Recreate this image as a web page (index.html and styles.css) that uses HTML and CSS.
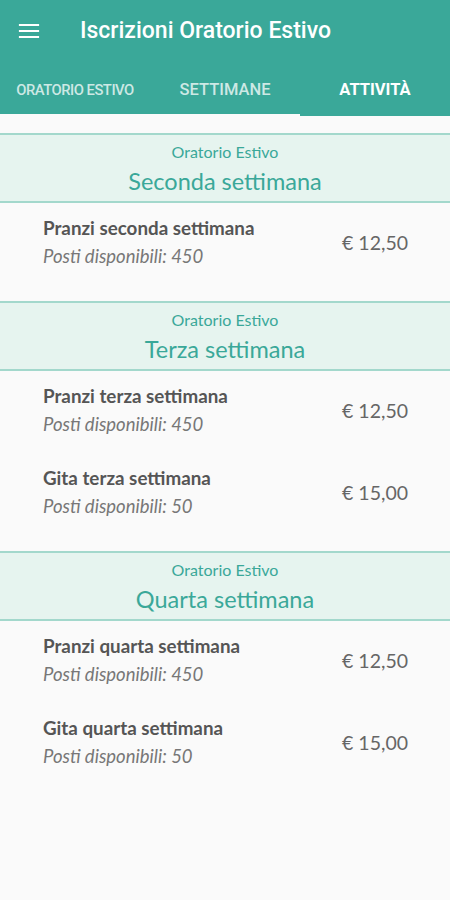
FILE: index.html
```html
<!DOCTYPE html>
<html lang="it">
<head>
  <meta charset="UTF-8" />
  <meta name="viewport" content="width=device-width, initial-scale=1.0"/>
  <title>Iscrizioni Oratorio Estivo</title>
  <link rel="stylesheet" href="styles.css">
</head>
<body>
  <header class="appbar">
    <div class="toolbar">
      <button class="menu-btn" aria-label="Menu">
        <svg width="24" height="24" viewBox="0 0 24 24">
          <path d="M3 6h18M3 12h18M3 18h18" stroke="#fff" stroke-width="2.2" stroke-linecap="square"/>
        </svg>
      </button>
      <h1>Iscrizioni Oratorio Estivo</h1>
    </div>
    <nav class="tabs">
      <div class="tab small">ORATORIO ESTIVO</div>
      <div class="tab">SETTIMANE</div>
      <div class="tab active">ATTIVITÀ</div>
    </nav>
  </header>

  <main class="content">
    <!-- Seconda settimana -->
    <section class="week">
      <div class="week-head">
        <div class="week-sub">Oratorio Estivo</div>
        <div class="week-title">Seconda settimana</div>
      </div>
      <div class="item">
        <div class="item-info">
          <div class="item-name">Pranzi seconda settimana</div>
          <div class="item-places">Posti disponibili: 450</div>
        </div>
        <div class="item-price">€ 12,50</div>
      </div>
    </section>

    <!-- Terza settimana -->
    <section class="week">
      <div class="week-head">
        <div class="week-sub">Oratorio Estivo</div>
        <div class="week-title">Terza settimana</div>
      </div>
      <div class="item">
        <div class="item-info">
          <div class="item-name">Pranzi terza settimana</div>
          <div class="item-places">Posti disponibili: 450</div>
        </div>
        <div class="item-price">€ 12,50</div>
      </div>
      <div class="item">
        <div class="item-info">
          <div class="item-name">Gita terza settimana</div>
          <div class="item-places">Posti disponibili: 50</div>
        </div>
        <div class="item-price">€ 15,00</div>
      </div>
    </section>

    <!-- Quarta settimana -->
    <section class="week">
      <div class="week-head">
        <div class="week-sub">Oratorio Estivo</div>
        <div class="week-title">Quarta settimana</div>
      </div>
      <div class="item">
        <div class="item-info">
          <div class="item-name">Pranzi quarta settimana</div>
          <div class="item-places">Posti disponibili: 450</div>
        </div>
        <div class="item-price">€ 12,50</div>
      </div>
      <div class="item">
        <div class="item-info">
          <div class="item-name">Gita quarta settimana</div>
          <div class="item-places">Posti disponibili: 50</div>
        </div>
        <div class="item-price">€ 15,00</div>
      </div>
    </section>
  </main>
</body>
</html>
```

FILE: styles.css
```css
html, body {
  height: 100%;
}

body {
  margin: 0;
  background: #fafafa;
  font-family: 'Lato', sans-serif;
  color: #555;
}

.appbar {
  background: #3aa899;
  color: #fff;
  font-family: 'Roboto', sans-serif;
}

.toolbar {
  height: 61px;
  display: flex;
  align-items: center;
}

.menu-btn {
  width: 60px;
  height: 61px;
  padding: 0 0 0 17px;
  border: none;
  background: none;
  display: flex;
  align-items: center;
}

.toolbar h1 {
  margin: 0 0 0 20px;
  font-size: 23px;
  font-weight: 500;
}

.tabs {
  display: flex;
  height: 53px;
}

.tab {
  flex: 1;
  display: flex;
  align-items: center;
  justify-content: center;
  padding-top: 4px;
  box-sizing: border-box;
  font-size: 16.5px;
  font-weight: 500;
  color: rgba(255, 255, 255, 0.75);
  position: relative;
}

.tab.small {
  font-size: 14.8px;
  letter-spacing: -0.5px;
}

.tab.active {
  color: #fff;
  font-weight: 700;
}

.tab.active::after {
  content: "";
  position: absolute;
  left: 0;
  right: 0;
  bottom: -2px;
  height: 2px;
  background: #3aa899;
}

.content {
  padding-top: 19px;
}

.week {
  padding-bottom: 16px;
}

.week-head {
  background: #e6f4ef;
  border-top: 2px solid #a3d8cc;
  border-bottom: 2px solid #a3d8cc;
  text-align: center;
  color: #3aa899;
  padding: 7px 0 3px;
}

.week-sub {
  font-size: 16px;
  line-height: 20px;
}

.week-title {
  font-size: 23.5px;
  line-height: 34px;
  margin-top: 2px;
}

.item {
  display: flex;
  align-items: center;
  justify-content: space-between;
  padding: 11px 42px 15px 43px;
}

.item-name {
  font-size: 18.8px;
  font-weight: 700;
  line-height: 28px;
  color: #555;
}

.item-places {
  font-size: 18.5px;
  font-style: italic;
  line-height: 28px;
  color: #777;
}

.item-price {
  font-size: 19.5px;
  color: #666;
}
```
